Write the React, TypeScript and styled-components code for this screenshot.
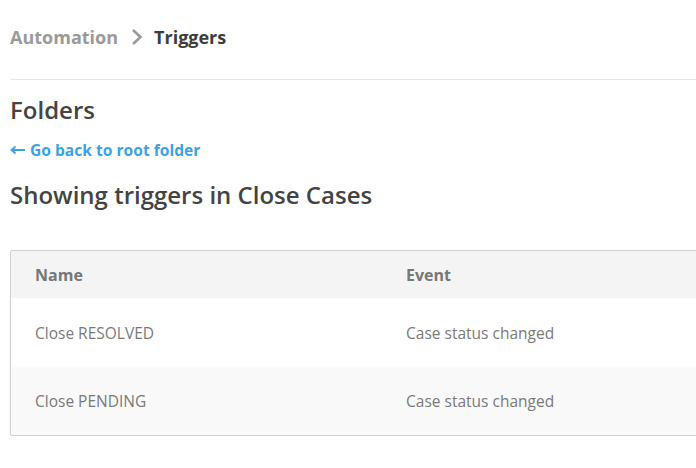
import React from 'react';
import styled, { createGlobalStyle } from 'styled-components';

const GlobalStyle = createGlobalStyle`
  html, body {
    margin: 0;
    padding: 0;
    background: #ffffff;
  }
  body {
    font-family: 'Open Sans', 'Liberation Sans', sans-serif;
    color: #444;
  }
`;

type Trigger = { id: number; name: string; event: string };

const triggers: Trigger[] = [
  { id: 1, name: 'Close RESOLVED', event: 'Case status changed' },
  { id: 2, name: 'Close PENDING', event: 'Case status changed' },
];

const App = () => (
  <>
    <GlobalStyle />
    <Page>
      <Header>
        <Crumb>Automation</Crumb>
        <Chevron width="12" height="18" viewBox="0 0 12 18">
          <polyline points="2,2 9.5,9 2,16" fill="none" stroke="#9a9a9a" strokeWidth="2.6" />
        </Chevron>
        <Crumb $current>Triggers</Crumb>
      </Header>
      <Title>Folders</Title>
      <BackLink href="#">
        <svg width="15" height="10" viewBox="0 0 15 10">
          <line x1="2" y1="5" x2="15" y2="5" stroke="#3ba3e0" strokeWidth="2" />
          <polyline points="5.5,1.5 1.5,5 5.5,8.5" fill="none" stroke="#3ba3e0" strokeWidth="1.8" />
        </svg>
        Go back to root folder
      </BackLink>
      <Title $spaced>Showing triggers in Close Cases</Title>
      <Table>
        <HeadRow>
          <Cell>Name</Cell>
          <Cell>Event</Cell>
        </HeadRow>
        {triggers.map((trigger, idx) => (
          <Row key={trigger.id} $striped={idx % 2 === 1}>
            <Cell>{trigger.name}</Cell>
            <Cell>{trigger.event}</Cell>
          </Row>
        ))}
      </Table>
    </Page>
  </>
);

const Page = styled.div`
  padding-left: 10px;
`;

const Header = styled.div`
  display: flex;
  align-items: center;
  height: 24px;
  padding: 25px 0 30px;
  border-bottom: 1px solid #e6e6e6;
`;

const Crumb = styled.span<{ $current?: boolean }>`
  font-size: 18px;
  font-weight: 700;
  line-height: 24px;
  color: ${({ $current }) => ($current ? '#3d3d3d' : '#9a9a9a')};
`;

const Chevron = styled.svg`
  margin: 0 11px 0 13px;
`;

const Title = styled.h2<{ $spaced?: boolean }>`
  margin: ${({ $spaced }) => ($spaced ? 19 : 14)}px 0 0;
  font-size: 24px;
  font-weight: 600;
  line-height: 32px;
  color: #444;
`;

const BackLink = styled.a`
  display: flex;
  align-items: center;
  gap: 5px;
  margin-top: 14px;
  font-size: 15.6px;
  font-weight: 700;
  line-height: 20px;
  color: #3ba3e0;
  text-decoration: none;
`;

const Table = styled.div`
  margin-top: 39px;
  border: 1px solid #d0d0d0;
  border-right: none;
  border-radius: 3px 0 0 3px;
  box-shadow: 0 1px 2px rgba(0, 0, 0, 0.08);
  overflow: hidden;
`;

const HeadRow = styled.div`
  display: grid;
  grid-template-columns: 371px 1fr;
  align-items: center;
  height: 47px;
  background: #f4f4f4;
  font-weight: 700;
  font-size: 16px;
  color: #777;
`;

const Row = styled.div<{ $striped: boolean }>`
  display: grid;
  grid-template-columns: 371px 1fr;
  align-items: center;
  height: ${({ $striped }) => ($striped ? 68 : 69)}px;
  background: ${({ $striped }) => ($striped ? '#f9f9f9' : '#ffffff')};
  font-size: 15.5px;
  color: #7a7a7a;
`;

const Cell = styled.div`
  padding-left: 24px;
`;

export default App;
